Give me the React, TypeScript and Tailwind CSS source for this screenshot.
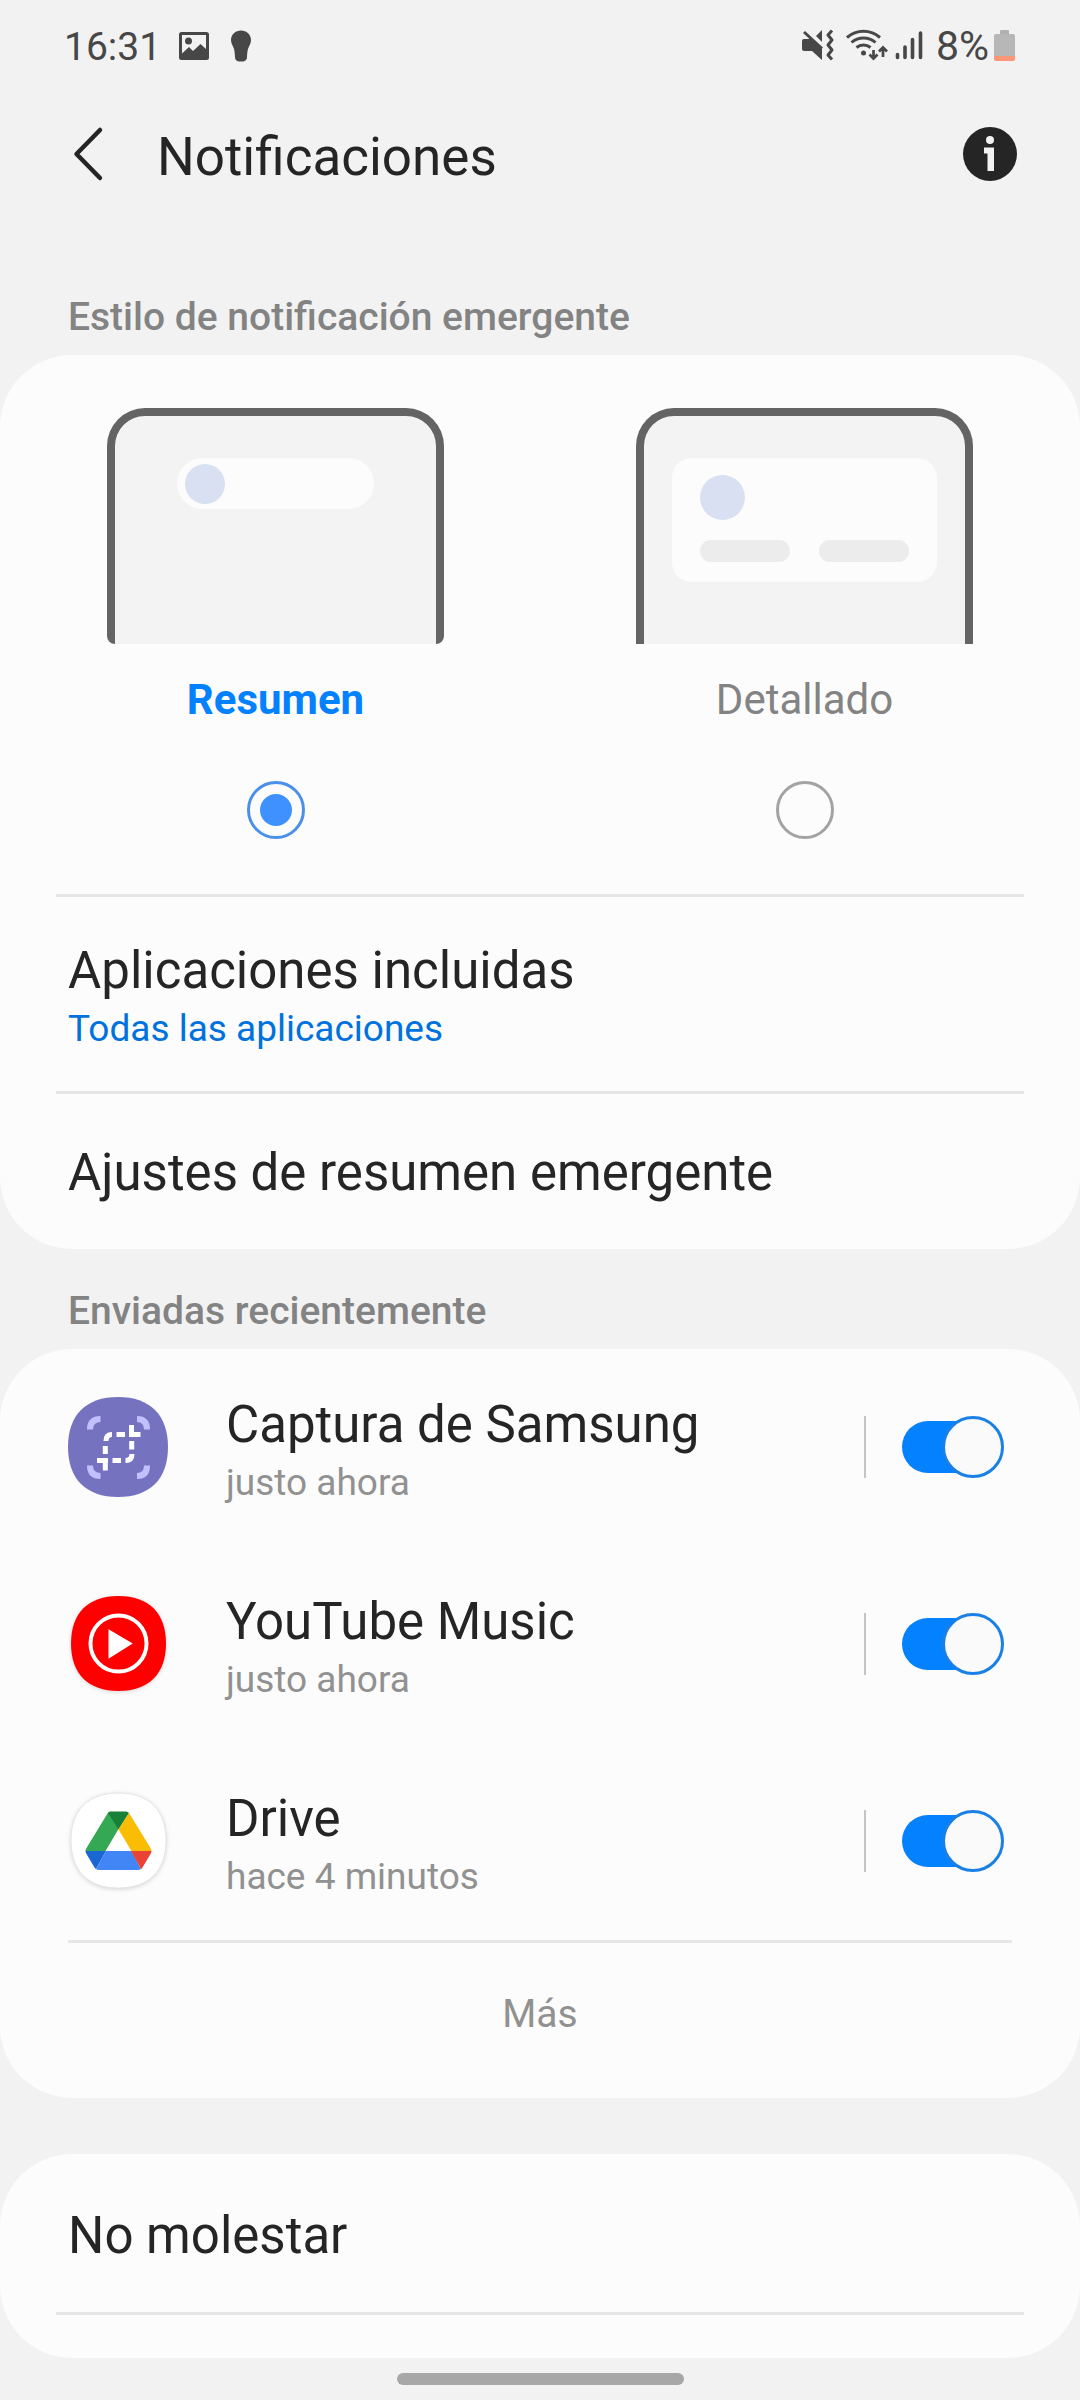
import { useState } from 'react';
import type { ReactNode } from 'react';

function SectionLabel({ children }: { children: ReactNode }) {
  return (
    <h2 className="px-[68px] pt-9 pb-3 text-[39px] leading-[52px] font-medium text-[#838383]">{children}</h2>
  );
}

function Card({ children }: { children: ReactNode }) {
  return <section className="rounded-[72px] bg-[#fcfcfc]">{children}</section>;
}

function PictureIcon() {
  return (
    <svg width="30" height="30" viewBox="0 0 30 30" fill="#474747" aria-hidden="true">
      <path
        fillRule="evenodd"
        d="M2.500 1h25a2.500 2.500 0 0 1 2.500 2.500v23a2.500 2.500 0 0 1-2.500 2.500h-25A2.500 2.500 0 0 1 0 26.500v-23A2.500 2.500 0 0 1 2.500 1zM3 4v18.500l7-6.500 4 4 7.500-7 5.500 5V4z"
      />
      <circle cx="9.500" cy="10" r="3.500" />
    </svg>
  );
}

function BulbIcon() {
  return (
    <svg width="20" height="32" viewBox="0 0 20 32" fill="#474747" aria-hidden="true">
      <path d="M10 .5C15.500.5 20 4.500 20 10c0 3.500-2 6-3 9-.7 2.200-.8 5-1 8-.1 1.500-.3 2.300-1 3-1 1-2.500 1.500-5 1.500S6 31 5 30c-.7-.7-.9-1.500-1-3-.2-3-.3-5.800-1-8-1-3-3-5.500-3-9C0 4.500 4.500.5 10 .5z" />
    </svg>
  );
}

function MuteVibrateIcon() {
  return (
    <svg width="32" height="32" viewBox="0 0 32 32" aria-hidden="true">
      <path d="M0 12q0-2 2-2h7l11 10v11L10 22H2q-2 0-2-2z" fill="#474747" />
      <path d="M20 1v12l-6-6z" fill="#474747" />
      <path d="M2 3l18 16.500" stroke="#474747" strokeWidth="3" />
      <path
        d="M30 1.500l-4 4.500 4 5-4 5 4 5-4 5 4 4.500"
        fill="none"
        stroke="#474747"
        strokeWidth="3"
        strokeLinejoin="round"
      />
    </svg>
  );
}

function WifiIcon() {
  return (
    <svg width="42" height="32" viewBox="0 0 42 32" fill="none" stroke="#474747" strokeWidth="3" aria-hidden="true">
      <path d="M1 8.500a25 25 0 0 1 33 0M5.500 13.500a18 18 0 0 1 24 0M10.500 18.500a11 11 0 0 1 14 0" />
      <circle cx="17.500" cy="24" r="2.500" fill="#474747" stroke="none" />
      <path d="M27.500 21v8M37 28v-9M23.500 25.500l4 4 4-4M33 22.500l4-4 4 4" strokeWidth="2.700" />
    </svg>
  );
}

function SignalIcon() {
  return (
    <svg width="28" height="30" viewBox="0 0 28 30" stroke="#474747" strokeWidth="3.600" strokeLinecap="round" aria-hidden="true">
      <path d="M2.500 24.500v3M10 17v10.500M17.500 9.500v18M25.500 3v24.500" />
    </svg>
  );
}

function BatteryIcon() {
  return (
    <svg width="22" height="32" viewBox="0 0 22 32" aria-hidden="true">
      <path d="M6 6V2q0-1 1-1h7q1 0 1 1v4z" fill="#b0b0b0" />
      <path d="M0 7q0-2 2-2h17q2 0 2 2v20H0z" fill="#b7b7b7" />
      <path d="M0 27h21v3q0 2-2 2H2q-2 0-2-2z" fill="#f99777" />
    </svg>
  );
}

function StatusBar() {
  return (
    <div className="flex h-[94px] items-center px-16 text-[#474747]">
      <span className="text-[39px]">16:31</span>
      <div className="flex flex-1 items-center gap-[22px] pb-0.5 pl-[18px]">
        <PictureIcon />
        <BulbIcon />
      </div>
      <div className="flex items-center pb-1">
        <MuteVibrateIcon />
        <div className="pr-[7px] pl-3">
          <WifiIcon />
        </div>
        <SignalIcon />
      </div>
      <span className="pr-[5px] pl-[13px] text-[41px]">8%</span>
      <div className="pb-1">
        <BatteryIcon />
      </div>
    </div>
  );
}

function Header() {
  return (
    <header className="mb-[41px] flex h-[120px] items-center pr-[63px] pl-[67px]">
      <button type="button" aria-label="Atrás" className="pr-12">
        <svg width="42" height="56" viewBox="0 0 42 56" fill="none" stroke="#252525" strokeWidth="4.500" strokeLinecap="round" strokeLinejoin="round">
          <path d="M33 4L9.500 28 33 52" />
        </svg>
      </button>
      <h1 className="flex-1 pt-1.5 text-[53px] leading-[72px] text-[#252525]">Notificaciones</h1>
      <button type="button" aria-label="Información">
        <svg width="54" height="54" viewBox="0 0 54 54">
          <circle cx="27" cy="27" r="27" fill="#252525" />
          <circle cx="27" cy="13" r="4" fill="#f2f2f2" />
          <path d="M21 20.500h10V44h-6.500V26.500H21z" fill="#f2f2f2" />
        </svg>
      </button>
    </header>
  );
}

function BriefPreview() {
  return (
    <div className="h-[236px] w-[337px] rounded-t-[38px] rounded-b-lg border-x-8 border-t-8 border-[#646464] bg-[#f3f3f3] px-[62px] pt-[42px]">
      <div className="flex h-[51px] items-center rounded-full bg-[#fcfcfc] pl-2">
        <div className="size-10 rounded-full bg-[#d8e0f1]" />
      </div>
    </div>
  );
}

function DetailedPreview() {
  return (
    <div className="h-[236px] w-[337px] rounded-t-[38px] border-x-8 border-t-8 border-[#646464] bg-[#f3f3f3] px-7 pt-[42px]">
      <div className="rounded-[20px] bg-[#fcfcfc] px-7 pt-[17px] pb-5">
        <div className="size-[45px] rounded-full bg-[#d8e0f1]" />
        <div className="mt-5 flex justify-between">
          <div className="h-[22px] w-[90px] rounded-full bg-[#ececec]" />
          <div className="h-[22px] w-[90px] rounded-full bg-[#ececec]" />
        </div>
      </div>
    </div>
  );
}

type StyleOptionProps = {
  label: string;
  checked: boolean;
  onSelect: () => void;
  children: ReactNode;
};

function StyleOption({ label, checked, onSelect, children }: StyleOptionProps) {
  return (
    <label className="flex flex-col items-center">
      {children}
      <span
        className={
          checked
            ? 'mt-7 text-[42px] leading-[56px] font-bold text-[#0381fe]'
            : 'mt-7 text-[42px] leading-[56px] text-[#838383]'
        }
      >
        {label}
      </span>
      <span className="mt-[53px] grid size-[58px] place-items-center">
        <input
          type="radio"
          name="estilo"
          checked={checked}
          onChange={onSelect}
          className="col-start-1 row-start-1 size-[58px] appearance-none rounded-full border-3 border-[#a3a3a3] checked:border-[#4a90ea]"
        />
        {checked && <span className="col-start-1 row-start-1 size-8 rounded-full bg-[#3e91ff]" />}
      </span>
    </label>
  );
}

function Divider() {
  return <hr className="mx-14 border-t-3 border-[#e6e6e6]" />;
}

const squircle = 'M50 0C82 0 100 18 100 50S82 100 50 100 0 82 0 50 18 0 50 0z';

function CaptureIcon() {
  return (
    <svg width="100" height="100" viewBox="0 0 100 100" aria-hidden="true">
      <path d={squircle} fill="#7573c0" />
      <path
        d="M22 32.500Q22 22 32.500 22M69 22Q79 22 79 32.500M79 68.500Q79 79 69 79M32.500 79Q22 79 22 68.500"
        fill="none"
        stroke="#c3c0ff"
        strokeWidth="6"
      />
      <path
        d="M38 44Q38 37.500 44 37.500M48.500 37.500H57M63.500 28v12M61 37.500h11.500M63.700 44v8.500M64 57Q64 63.500 57.500 63.500M53 63.500h-8.500M29 63.500h11M37.300 61v12.500M37.300 57v-8"
        fill="none"
        stroke="#fff"
        strokeWidth="5"
      />
    </svg>
  );
}

function YouTubeMusicIcon() {
  return (
    <svg width="100" height="100" viewBox="0 0 100 100" className="drop-shadow-sm" aria-hidden="true">
      <g transform="translate(3 2) scale(.95)">
        <path d={squircle} fill="#f00" />
        <circle cx="50" cy="50" r="29.500" fill="none" stroke="#fff" strokeWidth="4.200" />
        <path d="M39.500 35v31L65 50z" fill="#fff" />
      </g>
    </svg>
  );
}

function DriveIcon() {
  return (
    <svg width="100" height="100" viewBox="0 0 100 100" className="drop-shadow-sm" aria-hidden="true">
      <g transform="translate(3 2) scale(.95)">
        <path d={squircle} fill="#fff" stroke="#e4e4e4" strokeWidth="1" />
      </g>
      <g transform="translate(.5 1)">
        <path d="M39 21.500Q40 19.500 42.500 19.500L50 37 37 59H17q0-1.500 1-3z" fill="#34a853" />
        <path d="M39.500 21q1-1.500 3-1.500h15q2 0 3 1.500L50 37.500z" fill="#188038" />
        <path d="M60.500 21L82 56q1 1.500 1 3H63L50 37.500z" fill="#fbbc04" />
        <path d="M17 59h20.500L27.500 77q-1-.7-1.500-1.500l-8-13.500q-1-1.500-1-3z" fill="#1967d2" />
        <path d="M37.500 59H63l9.500 18q-1.500 1-3 1h-39q-1.500 0-3-1z" fill="#4285f4" />
        <path d="M62.500 59H83q0 1.500-1 3l-8 13.500q-.5 1-1.500 1.500z" fill="#ea4335" />
      </g>
    </svg>
  );
}

type AppRowProps = { name: string; time: string; icon: ReactNode };

function AppRow({ name, time, icon }: AppRowProps) {
  const [on, setOn] = useState(true);
  return (
    <li className="flex h-[197px] items-center pr-[76px] pb-px pl-[68px]">
      {icon}
      <div className="flex-1 pt-2 pl-[58px]">
        <p className="text-[51px] leading-[64px] text-[#252525]">{name}</p>
        <p className="text-[37px] leading-[52px] text-[#919191]">{time}</p>
      </div>
      <div className="mr-9 h-[62px] w-0.5 bg-[#c4c4c4]" />
      <button
        type="button"
        role="switch"
        aria-checked={on}
        aria-label={name}
        onClick={() => setOn(!on)}
        className="group grid w-[102px] items-center"
      >
        <span className="col-start-1 row-start-1 h-[52px] w-[92px] rounded-full bg-[#b5b5b5] group-aria-checked:bg-[#0381fe]" />
        <span className="col-start-1 row-start-1 size-[62px] rounded-full border-3 border-[#919191] bg-[#fafafa] group-aria-checked:justify-self-end group-aria-checked:border-[#1a80e6]" />
      </button>
    </li>
  );
}

export default function App() {
  const [style, setStyle] = useState('resumen');
  return (
    <div className="min-h-screen bg-[#f2f2f2] font-[Roboto,sans-serif]">
      <StatusBar />
      <Header />
      <main>
        <SectionLabel>Estilo de notificación emergente</SectionLabel>
        <Card>
          <div className="grid grid-cols-2 px-[11px] pt-[53px] pb-[55px]">
            <StyleOption label="Resumen" checked={style === 'resumen'} onSelect={() => setStyle('resumen')}>
              <BriefPreview />
            </StyleOption>
            <StyleOption label="Detallado" checked={style === 'detallado'} onSelect={() => setStyle('detallado')}>
              <DetailedPreview />
            </StyleOption>
          </div>
          <Divider />
          <button type="button" className="block w-full px-[68px] pt-[42px] pb-9 text-left">
            <span className="block text-[51px] leading-[64px] text-[#252525]">Aplicaciones incluidas</span>
            <span className="block text-[37px] leading-[52px] text-[#0072de]">Todas las aplicaciones</span>
          </button>
          <Divider />
          <button type="button" className="block w-full px-[68px] pt-[47px] pb-11 text-left text-[51px] leading-[64px] text-[#252525]">
            Ajustes de resumen emergente
          </button>
        </Card>

        <SectionLabel>Enviadas recientemente</SectionLabel>
        <Card>
          <ul>
            <AppRow name="Captura de Samsung" time="justo ahora" icon={<CaptureIcon />} />
            <AppRow name="YouTube Music" time="justo ahora" icon={<YouTubeMusicIcon />} />
            <AppRow name="Drive" time="hace 4 minutos" icon={<DriveIcon />} />
          </ul>
          <hr className="mx-[68px] border-t-3 border-[#e6e6e6]" />
          <button type="button" className="block w-full pt-[45px] pb-[58px] text-center text-[39px] leading-[52px] text-[#919191]">
            Más
          </button>
        </Card>

        <div className="pt-14">
          <Card>
            <button type="button" className="block w-full px-[68px] pt-[50px] pb-11 text-left text-[51px] leading-[64px] text-[#252525]">
              No molestar
            </button>
            <Divider />
            <div className="h-[43px]" />
          </Card>
        </div>
      </main>
      <div className="flex justify-center pt-[15px] pb-[15px]">
        <div className="h-3 w-[287px] rounded-full bg-[#a7a7a7]" />
      </div>
    </div>
  );
}
